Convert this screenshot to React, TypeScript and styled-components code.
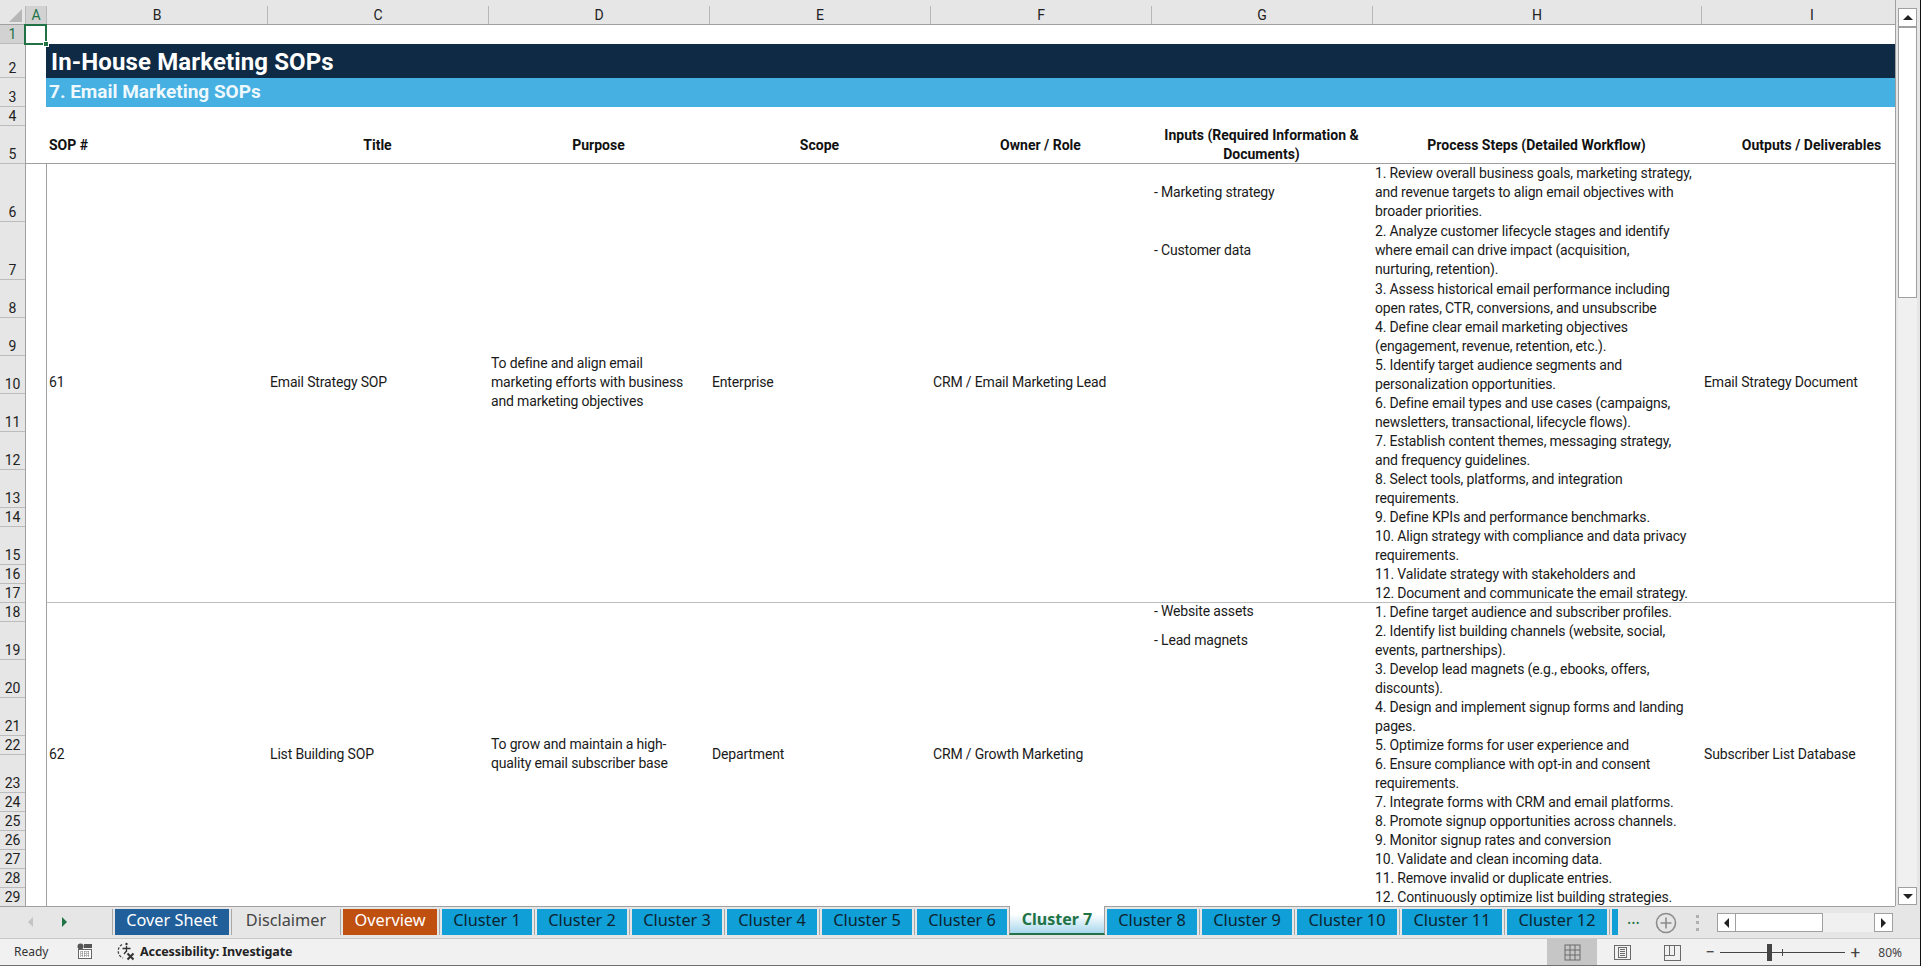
import React from "react";
import styled, { createGlobalStyle } from "styled-components";

const FONT = `Roboto, "Liberation Sans", sans-serif`;
const UI_FONT = `"Noto Sans", "Liberation Sans", sans-serif`;
const GRID_LINE = "#a0a0a0";
const HEADER_BG = "#e6e6e6";
const COLS = "220px repeat(5, 221px) 329px 221px";

const GlobalStyle = createGlobalStyle`
  html, body {
    margin: 0;
    padding: 0;
    background: #fff;
    overflow: hidden;
  }
`;

const columns = [
  { label: "A", w: 21, selected: true },
  { label: "B", w: 221 },
  { label: "C", w: 221 },
  { label: "D", w: 221 },
  { label: "E", w: 221 },
  { label: "F", w: 221 },
  { label: "G", w: 221 },
  { label: "H", w: 329 },
  { label: "I", w: 221 },
];

const rowHeights = [
  19, 34, 29, 19, 38, 58, 58, 38, 38, 38, 38, 38, 38, 19, 38, 19, 19, 19, 38, 38,
  38, 19, 38, 19, 19, 19, 19, 19, 19,
];

const records = [
  {
    id: "61",
    height: 439,
    title: "Email Strategy SOP",
    purpose: [
      "To define and align email",
      "marketing efforts with business",
      "and marketing objectives",
    ],
    scope: "Enterprise",
    owner: "CRM / Email Marketing Lead",
    inputs: [
      { text: "- Marketing strategy", h: 58 },
      { text: "- Customer data", h: 58 },
    ],
    steps: [
      [
        "1. Review overall business goals, marketing strategy,",
        "and revenue targets to align email objectives with",
        "broader priorities.",
      ],
      [
        "2. Analyze customer lifecycle stages and identify",
        "where email can drive impact (acquisition,",
        "nurturing, retention).",
      ],
      [
        "3. Assess historical email performance including",
        "open rates, CTR, conversions, and unsubscribe",
      ],
      [
        "4. Define clear email marketing objectives",
        "(engagement, revenue, retention, etc.).",
      ],
      ["5. Identify target audience segments and", "personalization opportunities."],
      [
        "6. Define email types and use cases (campaigns,",
        "newsletters, transactional, lifecycle flows).",
      ],
      ["7. Establish content themes, messaging strategy,", "and frequency guidelines."],
      ["8. Select tools, platforms, and integration", "requirements."],
      ["9. Define KPIs and performance benchmarks."],
      ["10. Align strategy with compliance and data privacy", "requirements."],
      ["11. Validate strategy with stakeholders and"],
      ["12. Document and communicate the email strategy."],
    ],
    output: "Email Strategy Document",
  },
  {
    id: "62",
    height: 304,
    title: "List Building SOP",
    purpose: ["To grow and maintain a high-", "quality email subscriber base"],
    scope: "Department",
    owner: "CRM / Growth Marketing",
    inputs: [
      { text: "- Website assets", h: 19 },
      { text: "- Lead magnets", h: 38 },
    ],
    steps: [
      ["1. Define target audience and subscriber profiles."],
      ["2. Identify list building channels (website, social,", "events, partnerships)."],
      ["3. Develop lead magnets (e.g., ebooks, offers,", "discounts)."],
      ["4. Design and implement signup forms and landing", "pages."],
      ["5. Optimize forms for user experience and"],
      ["6. Ensure compliance with opt-in and consent", "requirements."],
      ["7. Integrate forms with CRM and email platforms."],
      ["8. Promote signup opportunities across channels."],
      ["9. Monitor signup rates and conversion"],
      ["10. Validate and clean incoming data."],
      ["11. Remove invalid or duplicate entries."],
      ["12. Continuously optimize list building strategies."],
    ],
    output: "Subscriber List Database",
  },
];

const tabs = [
  { label: "Cover Sheet", w: 114, bg: "#215f9a", color: "#fff" },
  { label: "Disclaimer", w: 104, bg: "transparent", color: "#444" },
  { label: "Overview", w: 94, bg: "#c0500f", color: "#fff" },
  ...[1, 2, 3, 4, 5, 6].map((n) => ({ label: `Cluster ${n}`, w: 90, bg: "#109fd6", color: "#0c2430" })),
  { label: "Cluster 7", w: 96, bg: "#fff", color: "#217346", active: true },
  ...[8, 9].map((n) => ({ label: `Cluster ${n}`, w: 90, bg: "#109fd6", color: "#0c2430" })),
  ...[10, 11, 12].map((n) => ({ label: `Cluster ${n}`, w: 100, bg: "#109fd6", color: "#0c2430" })),
  { label: "", w: 100, bg: "#109fd6", color: "#0c2430" },
];

const Page = styled.div`
  width: 1921px;
  height: 966px;
  box-sizing: border-box;
  display: flex;
  flex-direction: column;
  overflow: hidden;
  border-right: 1px solid #111;
  font-family: ${FONT};
  color: #1a1a1a;
`;

const Main = styled.div`
  display: flex;
  height: 906px;
`;

const Sheet = styled.div`
  position: relative;
  width: 1895px;
  display: flex;
  flex-direction: column;
  border-right: 1px solid ${GRID_LINE};
  box-sizing: content-box;
  margin-right: -1px;
`;

const ColumnBar = styled.div`
  display: flex;
  height: 25px;
  box-sizing: border-box;
  padding-top: 6px;
  background: ${HEADER_BG};
  border-bottom: 1px solid ${GRID_LINE};
  overflow: hidden;
`;

const Corner = styled.div`
  flex: none;
  width: 26px;
  display: flex;
  justify-content: flex-end;
  align-items: flex-end;
  padding: 0 3px 2px 0;
  box-sizing: border-box;
  border-right: 1px solid #b8b8b8;

  &::after {
    content: "";
    width: 13px;
    height: 13px;
    background: #b7b7b7;
    clip-path: polygon(100% 0, 100% 100%, 0 100%);
  }
`;

const ColumnCell = styled.div<{ $w: number; $selected?: boolean }>`
  flex: none;
  width: ${(p) => p.$w}px;
  box-sizing: border-box;
  display: flex;
  align-items: center;
  justify-content: center;
  font-size: 14px;
  color: ${(p) => (p.$selected ? "#217346" : "#222")};
  background: ${(p) => (p.$selected ? "#d2d2d2" : "transparent")};
  border-right: 1px solid #b8b8b8;
`;

const Body = styled.div`
  display: flex;
  height: 881px;
  overflow: hidden;
`;

const RowGutter = styled.div`
  flex: none;
  width: 26px;
  box-sizing: border-box;
  background: ${HEADER_BG};
  border-right: 1px solid ${GRID_LINE};
`;

const RowCell = styled.div<{ $h: number; $selected?: boolean }>`
  height: ${(p) => p.$h}px;
  box-sizing: border-box;
  display: flex;
  align-items: flex-end;
  justify-content: center;
  font-size: 14px;
  line-height: 18px;
  color: ${(p) => (p.$selected ? "#217346" : "#222")};
  background: ${(p) => (p.$selected ? "#d2d2d2" : "transparent")};
  border-bottom: 1px solid #bcbcbc;
`;

const Grid = styled.div`
  flex: 1;
  min-width: 0;
  display: flex;
  flex-direction: column;
  overflow: hidden;
  background: #fff;
`;

const BlankRow = styled.div`
  flex: none;
  height: 19px;
`;

const TitleBand = styled.div`
  flex: none;
  height: 34px;
  box-sizing: border-box;
  margin-left: 20px;
  padding: 2px 0 0 5px;
  display: flex;
  align-items: center;
  background: #0f2a44;
  color: #fff;
  font-size: 24px;
  font-weight: 700;
  letter-spacing: 0.12px;
`;

const SubtitleBand = styled.div`
  flex: none;
  height: 29px;
  box-sizing: border-box;
  margin-left: 20px;
  padding: 0 0 2px 3px;
  display: flex;
  align-items: center;
  background: #45b0e1;
  color: #eef8fd;
  font-size: 19px;
  font-weight: 700;
`;

const HeaderRow = styled.div`
  flex: none;
  height: 38px;
  box-sizing: border-box;
  padding-left: 21px;
  display: grid;
  grid-template-columns: ${COLS};
  border-bottom: 1px solid ${GRID_LINE};
`;

const HeaderCell = styled.div<{ $left?: boolean }>`
  display: flex;
  align-items: center;
  justify-content: ${(p) => (p.$left ? "flex-start" : "center")};
  padding: 0 0 2px ${(p) => (p.$left ? "2px" : "0")};
  text-align: center;
  font-size: 14px;
  line-height: 19px;
  font-weight: 700;
  color: #111;
  white-space: nowrap;
`;

const DataRow = styled.div<{ $h: number }>`
  flex: none;
  height: ${(p) => p.$h}px;
  box-sizing: border-box;
  margin-left: 20px;
  display: grid;
  grid-template-columns: ${COLS};
  border-left: 1px solid ${GRID_LINE};
  border-bottom: 1px solid #bcbcbc;
  font-size: 14px;
  line-height: 19px;
  letter-spacing: -0.16px;
  white-space: nowrap;
`;

const Cell = styled.div<{ $first?: boolean }>`
  display: flex;
  flex-direction: column;
  justify-content: center;
  padding: 0 0 2px ${(p) => (p.$first ? "2px" : "3px")};
  min-width: 0;
`;

const InputsCell = styled.div`
  padding-left: 3px;
  margin-top: -1px;
  min-width: 0;
`;

const StepsCell = styled.div`
  padding-left: 3px;
  min-width: 0;
`;

const InputItem = styled.div<{ $h: number }>`
  height: ${(p) => p.$h}px;
  display: flex;
  align-items: center;
`;

const Step = styled.div<{ $tall?: boolean }>`
  padding-bottom: ${(p) => (p.$tall ? "1px" : "0")};
`;

const Selection = styled.div`
  position: absolute;
  left: 24px;
  top: 24px;
  width: 23px;
  height: 21px;
  box-sizing: border-box;
  border: 2px solid #217346;

  &::after {
    content: "";
    position: absolute;
    right: -4px;
    bottom: -4px;
    width: 4px;
    height: 4px;
    background: #217346;
    border: 1px solid #fff;
  }
`;

const VScroll = styled.div`
  flex: none;
  width: 25px;
  box-sizing: border-box;
  display: flex;
  flex-direction: column;
  padding: 8px 3px 1px 3px;
  background: ${HEADER_BG};
`;

const ScrollButton = styled.div<{ $h: number }>`
  flex: none;
  height: ${(p) => p.$h}px;
  box-sizing: border-box;
  display: flex;
  align-items: center;
  justify-content: center;
  background: #fff;
  border: 1px solid ${GRID_LINE};
`;

const Arrow = styled.span<{ $dir: "up" | "down" | "left" | "right"; $color?: string }>`
  width: 0;
  height: 0;
  border: 5px solid transparent;
  ${(p) => {
    const c = p.$color ?? "#222";
    if (p.$dir === "up") return `border-bottom-color: ${c}; border-top-width: 0;`;
    if (p.$dir === "down") return `border-top-color: ${c}; border-bottom-width: 0;`;
    if (p.$dir === "left") return `border-right-color: ${c}; border-left-width: 0;`;
    return `border-left-color: ${c}; border-right-width: 0;`;
  }}
`;

const VThumb = styled.div`
  flex: none;
  height: 271px;
  box-sizing: border-box;
  background: #fff;
  border: 1px solid ${GRID_LINE};
`;

const VTrack = styled.div`
  flex: 1;
  background: #f0f0f0;
`;

const TabBar = styled.div`
  flex: none;
  position: relative;
  height: 33px;
  box-sizing: border-box;
  display: flex;
  background: ${HEADER_BG};
  border-bottom: 1px solid #c8c8c8;

  &::before {
    content: "";
    position: absolute;
    left: 0;
    right: 25px;
    top: 0;
    height: 1px;
    background: ${GRID_LINE};
  }
`;

const NavArrows = styled.div`
  flex: none;
  width: 110px;
  box-sizing: border-box;
  padding: 0 43px 0 28px;
  display: flex;
  align-items: center;
  justify-content: space-between;
`;

const TabStrip = styled.div`
  position: relative;
  flex: none;
  width: 1508px;
  padding-top: 3px;
  box-sizing: border-box;
  display: flex;
  align-items: flex-start;
  overflow: hidden;
`;

const TabSep = styled.div`
  flex: none;
  width: 1px;
  height: 26px;
  margin: 0 2px;
  background: #a8a8a8;
`;

const Tab = styled.div<{ $w: number; $bg: string; $color: string }>`
  flex: none;
  width: ${(p) => p.$w}px;
  height: 26px;
  box-sizing: border-box;
  padding-bottom: 5px;
  display: flex;
  align-items: center;
  justify-content: center;
  background: ${(p) => p.$bg};
  color: ${(p) => p.$color};
  font-family: ${UI_FONT};
  font-size: 16.3px;
  white-space: nowrap;
`;

const ActiveTab = styled(Tab)`
  height: 29px;
  margin: -3px 2px 0;
  padding: 0 0 2px;
  font-size: 16px;
  font-weight: 700;
  background: linear-gradient(#fff 30%, #a9d8ee);
  border-left: 1px solid ${GRID_LINE};
  border-right: 1px solid ${GRID_LINE};
  border-bottom: 2px solid #217346;
`;

const Ellipsis = styled.div`
  flex: none;
  width: 22px;
  margin-left: 9px;
  color: #217346;
  font-family: ${UI_FONT};
  font-size: 16px;
  padding-top: 1px;
`;

const AddButton = styled.svg`
  flex: none;
  width: 22px;
  height: 22px;
  margin: 6px 0 0 6px;
`;

const DragDots = styled.div`
  flex: none;
  width: 3px;
  height: 16px;
  margin: 9px 0 0 19px;
  background: repeating-linear-gradient(#b0b0b0 0 3px, transparent 3px 6.5px);
`;

const HScroll = styled.div`
  flex: none;
  width: 176px;
  height: 19px;
  margin: 7px 0 0 18px;
  box-sizing: border-box;
  display: flex;
  background: #f0f0f0;
`;

const HButton = styled.div`
  flex: none;
  width: 19px;
  box-sizing: border-box;
  display: flex;
  align-items: center;
  justify-content: center;
  background: #fff;
  border: 1px solid ${GRID_LINE};
`;

const HThumb = styled.div`
  flex: none;
  width: 87px;
  box-sizing: border-box;
  background: #fff;
  border: 1px solid ${GRID_LINE};
  border-left: none;
`;

const HTrack = styled.div`
  flex: 1;
`;

const StatusBar = styled.div`
  flex: none;
  height: 27px;
  box-sizing: border-box;
  display: flex;
  align-items: center;
  background: #f1f1f1;
  border-bottom: 1px solid #707070;
  font-family: ${UI_FONT};
  font-size: 12px;
  color: #333;
`;

const StatusLeft = styled.div`
  display: flex;
  align-items: center;
  padding-bottom: 2px;
`;

const Ready = styled.span`
  margin-left: 14px;
  width: 63px;
  flex: none;
`;

const MacroSlot = styled.span`
  flex: none;
  width: 39px;
  display: flex;
`;

const StatusIcon = styled.svg`
  flex: none;
`;

const AccessibilityText = styled.span`
  margin-left: 4px;
  font-weight: 700;
  font-size: 12.5px;
  letter-spacing: -0.1px;
  color: #222;
  white-space: nowrap;
`;

const StatusRight = styled.div`
  margin-left: auto;
  display: flex;
  align-items: center;
  height: 100%;
`;

const ViewButton = styled.div<{ $active?: boolean }>`
  width: 50px;
  height: 100%;
  display: flex;
  align-items: center;
  justify-content: center;
  background: ${(p) => (p.$active ? "#c6c6c6" : "transparent")};
`;

const ZoomControls = styled.div`
  margin-left: 7px;
  display: flex;
  align-items: center;
`;

const ZoomSign = styled.span`
  font-family: ${FONT};
  font-size: 17px;
  color: #444;
  width: 12px;
  text-align: center;
`;

const ZoomSlider = styled.div`
  position: relative;
  width: 125px;
  height: 1px;
  margin: 0 4px;
  background: #444;
`;

const ZoomThumb = styled.div`
  position: absolute;
  left: 47px;
  top: -8px;
  width: 5px;
  height: 17px;
  background: #444;
`;

const ZoomTick = styled.div`
  position: absolute;
  left: 62px;
  top: -3px;
  width: 1px;
  height: 7px;
  background: #444;
`;

const ZoomValue = styled.span`
  margin: 0 18px 0 17px;
  color: #444;
`;

const MacroIcon = () => (
  <StatusIcon width="16" height="16" viewBox="0 0 16 16">
    <circle cx="3.5" cy="3.5" r="3" fill="#555" />
    <rect x="7" y="1" width="8" height="4" fill="#555" />
    <rect x="1.5" y="6.5" width="13" height="9" fill="#fff" stroke="#666" />
    <path d="M3 9h10M3 11h10M3 13h10M5 8v6M8 8v6M11 8v6" stroke="#777" strokeWidth="1" strokeDasharray="1 1" />
  </StatusIcon>
);

const AccessibilityIcon = () => (
  <StatusIcon width="20" height="20" viewBox="0 0 20 20" fill="none">
    <path d="M6 3.5A7.5 7.5 0 0 0 7 17" stroke="#444" strokeWidth="1.3" strokeDasharray="2.5 1.5" />
    <circle cx="10.5" cy="3" r="1.2" fill="#333" />
    <path d="M10.5 5v6M6.5 7.5h8M10.5 10l-2.5 3" stroke="#333" strokeWidth="1.3" />
    <path d="M11.5 12.5l6 6M17.5 12.5l-6 6" stroke="#333" strokeWidth="2" />
  </StatusIcon>
);

const NormalViewIcon = () => (
  <StatusIcon width="17" height="17" viewBox="0 0 17 17" fill="none" stroke="#6a6a6a">
    <rect x="1" y="1" width="15" height="15" />
    <path d="M6 1v15M11 1v15M1 6h15M1 11h15" />
  </StatusIcon>
);

const PageViewIcon = () => (
  <StatusIcon width="17" height="17" viewBox="0 0 17 17" fill="none" stroke="#6a6a6a">
    <rect x="0.5" y="1.5" width="16" height="14" />
    <rect x="4.5" y="3.5" width="8" height="10" />
    <path d="M6 5.5h5M6 7.5h5M6 9.5h5M6 11.5h5" />
  </StatusIcon>
);

const BreakViewIcon = () => (
  <StatusIcon width="17" height="17" viewBox="0 0 17 17" fill="none" stroke="#6a6a6a">
    <rect x="0.5" y="1.5" width="16" height="15" />
    <path d="M0.5 11.5h10M10.5 1.5v10M5.5 1.5v10" />
  </StatusIcon>
);

const App = () => {
  return (
    <Page>
      <GlobalStyle />
      <Main>
        <Sheet>
          <ColumnBar>
            <Corner />
            {columns.map((c) => (
              <ColumnCell key={c.label} $w={c.w} $selected={c.selected}>
                {c.label}
              </ColumnCell>
            ))}
          </ColumnBar>
          <Body>
            <RowGutter>
              {rowHeights.map((h, i) => (
                <RowCell key={i} $h={h} $selected={i === 0}>
                  {i + 1}
                </RowCell>
              ))}
            </RowGutter>
            <Grid>
              <BlankRow />
              <TitleBand>In-House Marketing SOPs</TitleBand>
              <SubtitleBand>7. Email Marketing SOPs</SubtitleBand>
              <BlankRow />
              <HeaderRow>
                <HeaderCell $left>SOP #</HeaderCell>
                <HeaderCell>Title</HeaderCell>
                <HeaderCell>Purpose</HeaderCell>
                <HeaderCell>Scope</HeaderCell>
                <HeaderCell>Owner / Role</HeaderCell>
                <HeaderCell>
                  Inputs (Required Information &amp;
                  <br />
                  Documents)
                </HeaderCell>
                <HeaderCell>Process Steps (Detailed Workflow)</HeaderCell>
                <HeaderCell>Outputs / Deliverables</HeaderCell>
              </HeaderRow>
              {records.map((r) => (
                <DataRow key={r.id} $h={r.height}>
                  <Cell $first>{r.id}</Cell>
                  <Cell>{r.title}</Cell>
                  <Cell>
                    {r.purpose.map((line) => (
                      <div key={line}>{line}</div>
                    ))}
                  </Cell>
                  <Cell>{r.scope}</Cell>
                  <Cell>{r.owner}</Cell>
                  <InputsCell>
                    {r.inputs.map((item) => (
                      <InputItem key={item.text} $h={item.h}>
                        {item.text}
                      </InputItem>
                    ))}
                  </InputsCell>
                  <StepsCell>
                    {r.steps.map((lines, i) => (
                      <Step key={i} $tall={r.id === "61" && i < 2}>
                        {lines.map((line) => (
                          <div key={line}>{line}</div>
                        ))}
                      </Step>
                    ))}
                  </StepsCell>
                  <Cell>{r.output}</Cell>
                </DataRow>
              ))}
            </Grid>
          </Body>
          <Selection />
        </Sheet>
        <VScroll>
          <ScrollButton $h={19}>
            <Arrow $dir="up" />
          </ScrollButton>
          <VThumb />
          <VTrack />
          <ScrollButton $h={18}>
            <Arrow $dir="down" />
          </ScrollButton>
        </VScroll>
      </Main>
      <TabBar>
        <NavArrows>
          <Arrow $dir="left" $color="#c4c4c4" />
          <Arrow $dir="right" $color="#217346" />
        </NavArrows>
        <TabStrip>
          <TabSep />
          {tabs.map((t, i) => {
            const next = tabs[i + 1];
            if (t.active) {
              return (
                <ActiveTab key={t.label} $w={t.w} $bg={t.bg} $color={t.color}>
                  {t.label}
                </ActiveTab>
              );
            }
            return (
              <React.Fragment key={t.label || "partial"}>
                <Tab $w={t.w} $bg={t.bg} $color={t.color}>
                  {t.label}
                </Tab>
                {next && !next.active ? <TabSep /> : null}
              </React.Fragment>
            );
          })}
        </TabStrip>
        <Ellipsis>...</Ellipsis>
        <AddButton viewBox="0 0 22 22" fill="none" stroke="#8c8c8c" strokeWidth="1.6">
          <circle cx="11" cy="11" r="9.5" />
          <path d="M11 5.5v11M5.5 11h11" />
        </AddButton>
        <DragDots />
        <HScroll>
          <HButton>
            <Arrow $dir="left" />
          </HButton>
          <HThumb />
          <HTrack />
          <HButton>
            <Arrow $dir="right" />
          </HButton>
        </HScroll>
      </TabBar>
      <StatusBar>
        <StatusLeft>
          <Ready>Ready</Ready>
          <MacroSlot>
            <MacroIcon />
          </MacroSlot>
          <AccessibilityIcon />
          <AccessibilityText>Accessibility: Investigate</AccessibilityText>
        </StatusLeft>
        <StatusRight>
          <ViewButton $active>
            <NormalViewIcon />
          </ViewButton>
          <ViewButton>
            <PageViewIcon />
          </ViewButton>
          <ViewButton>
            <BreakViewIcon />
          </ViewButton>
          <ZoomControls>
            <ZoomSign>−</ZoomSign>
            <ZoomSlider>
              <ZoomThumb />
              <ZoomTick />
            </ZoomSlider>
            <ZoomSign>+</ZoomSign>
            <ZoomValue>80%</ZoomValue>
          </ZoomControls>
        </StatusRight>
      </StatusBar>
    </Page>
  );
};

export default App;
